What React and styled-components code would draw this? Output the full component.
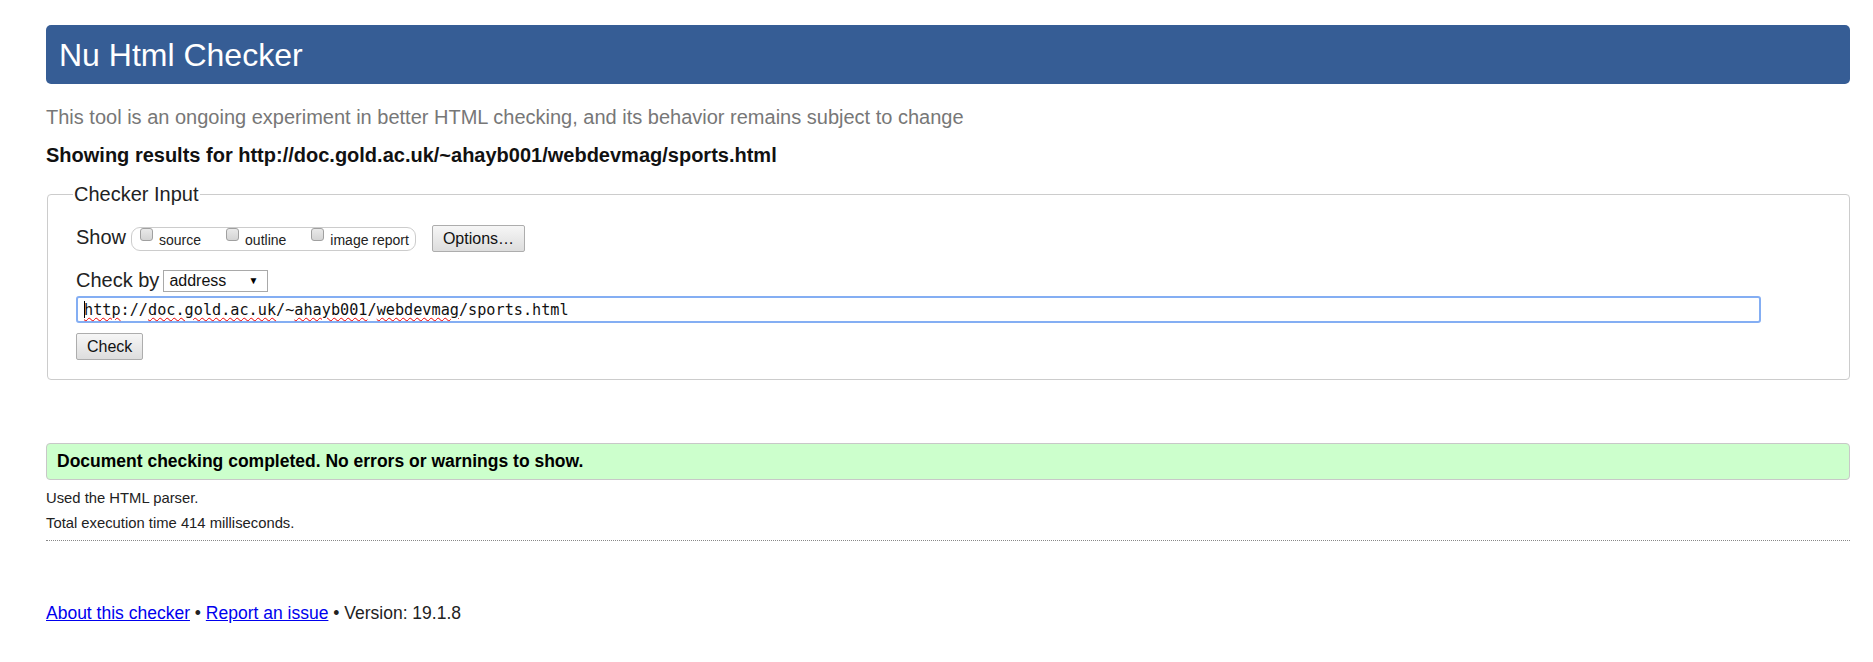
import React from "react";
import styled, { createGlobalStyle } from "styled-components";

const GlobalStyle = createGlobalStyle`
  html, body { margin: 0; padding: 0; background: #fff; }
  body {
    font-family: "Liberation Sans", Arial, sans-serif;
    color: #222;
  }
`;

const Page = styled.div`
  padding: 25px 23px 0 46px;
`;

const Header = styled.h1`
  margin: 0;
  padding: 12px 13px 10px;
  background: #365d95;
  color: #fff;
  border-radius: 5px;
  font-size: 32px;
  line-height: 37px;
  font-weight: normal;
`;

const Tagline = styled.p`
  margin: 22px 0 0;
  font-size: 20px;
  line-height: 23px;
  color: #777;
`;

const ResultsFor = styled.p`
  margin: 15px 0 0;
  font-size: 20px;
  line-height: 23px;
  font-weight: bold;
  color: #111;
`;

const Fieldset = styled.fieldset`
  margin: 16px 0 0 1px;
  padding: 19px 28px 19px 28px;
  border: 1px solid #ccc;
  border-radius: 4px;
  min-width: 0;
`;

const Legend = styled.legend`
  margin-left: -3px;
  padding: 0 1px;
  font-size: 20px;
  line-height: 23px;
  color: #222;
`;

const Row = styled.div`
  display: flex;
  align-items: center;
  gap: ${(p) => p.$gap || 0}px;
  margin-top: ${(p) => p.$top || 0}px;
`;

const RowLabel = styled.span`
  font-size: 20px;
  line-height: 23px;
  margin-bottom: ${(p) => p.$lift || 0}px;
  color: #222;
`;

const Pill = styled.div`
  display: flex;
  align-items: center;
  height: 24px;
  box-sizing: border-box;
  padding: 0 6px 0 8px;
  border: 1px solid #ccc;
  border-radius: 9px;
  margin-right: 11px;
`;

const Option = styled.label`
  display: flex;
  align-items: center;
  height: 22px;
  margin-right: ${(p) => (p.$last ? 0 : 25)}px;
  font-size: 14px;
  color: #222;
`;

const Box = styled.input.attrs({ type: "checkbox" })`
  appearance: none;
  -webkit-appearance: none;
  margin: 0 6px 0 0;
  align-self: flex-start;
  width: 13px;
  height: 13px;
  box-sizing: border-box;
  border: 1px solid #a0a0a0;
  border-radius: 3px;
  background: linear-gradient(#e9e9e9, #d4d4d4);
`;

const OptionText = styled.span`
  margin-top: 2px;
`;

const Button = styled.button`
  height: 27px;
  box-sizing: border-box;
  padding: 0 ${(p) => p.$pad || 10}px;
  font-family: "Liberation Sans", Arial, sans-serif;
  font-size: 16px;
  color: #111;
  border: 1px solid #adadad;
  border-radius: 2px;
  background: linear-gradient(#f6f6f6, #dddddd);
`;

const SelectWrap = styled.div`
  position: relative;
  width: 105px;
  height: 22px;
`;

const Select = styled.select`
  appearance: none;
  -webkit-appearance: none;
  width: 100%;
  height: 100%;
  box-sizing: border-box;
  padding: 0 0 0 5px;
  border: 1px solid #a9a9a9;
  border-radius: 0;
  background: #fff;
  font-family: "Liberation Sans", Arial, sans-serif;
  font-size: 16px;
  color: #111;
`;

const Arrow = styled.span`
  position: absolute;
  right: 10px;
  top: 5px;
  font-size: 10px;
  line-height: 12px;
  color: #000;
  pointer-events: none;
`;

const UrlField = styled.div`
  margin-top: 4px;
  width: 1685px;
  height: 27px;
  box-sizing: border-box;
  display: flex;
  align-items: center;
  padding: 0 0 0 6px;
  border: 2px solid #84aef3;
  border-radius: 3px;
  font-family: "DejaVu Sans Mono", "Liberation Mono", monospace;
  font-size: 15.2px;
  color: #111;
  white-space: pre;
`;

const Caret = styled.span`
  display: inline-block;
  width: 1px;
  height: 17px;
  margin-right: -1px;
  background: #000;
`;

const Misspelled = styled.span`
  text-decoration: underline wavy #e00;
  text-decoration-thickness: 1px;
  text-underline-offset: 2px;
`;

const CheckRow = styled.div`
  margin-top: 10px;
`;

const Notice = styled.div`
  margin-top: 63px;
  padding: 7px 10px;
  border: 1px solid #c8c8c8;
  border-radius: 4px;
  background: #ccffcc;
  font-size: 17.5px;
  line-height: 21px;
  font-weight: bold;
  color: #000;
`;

const Detail = styled.p`
  margin: ${(p) => p.$top}px 0 0;
  font-size: 14.8px;
  line-height: 18px;
  color: #222;
`;

const Rule = styled.hr`
  margin: 8px 0 0;
  border: 0;
  border-top: 1px dotted #888;
  height: 0;
`;

const Footer = styled.p`
  margin: 62px 0 0;
  font-size: 17.5px;
  line-height: 20px;
  color: #222;
`;

const Link = styled.a`
  color: #0000ee;
  text-decoration: underline;
`;

export default function App() {
  return (
    <>
      <GlobalStyle />
      <Page>
        <Header>Nu Html Checker</Header>
        <Tagline>
          This tool is an ongoing experiment in better HTML checking, and its behavior remains subject to change
        </Tagline>
        <ResultsFor>Showing results for http://doc.gold.ac.uk/~ahayb001/webdevmag/sports.html</ResultsFor>

        <Fieldset>
          <Legend>Checker Input</Legend>
          <Row $gap={5}>
            <RowLabel $lift={3}>Show</RowLabel>
            <Pill>
              <Option>
                <Box />
                <OptionText>source</OptionText>
              </Option>
              <Option>
                <Box />
                <OptionText>outline</OptionText>
              </Option>
              <Option $last>
                <Box />
                <OptionText>image report</OptionText>
              </Option>
            </Pill>
            <Button $pad={10}>Options…</Button>
          </Row>
          <Row $gap={4} $top={17}>
            <RowLabel>Check by</RowLabel>
            <SelectWrap>
              <Select defaultValue="address">
                <option value="address">address</option>
                <option value="file">file upload</option>
                <option value="text">text input</option>
              </Select>
              <Arrow>▼</Arrow>
            </SelectWrap>
          </Row>
          <UrlField role="textbox">
            <Caret />
            <Misspelled>http</Misspelled>://<Misspelled>doc.gold.ac.uk</Misspelled>/~
            <Misspelled>ahayb001</Misspelled>/<Misspelled>webdevmag</Misspelled>/sports.html
          </UrlField>
          <CheckRow>
            <Button $pad={10}>Check</Button>
          </CheckRow>
        </Fieldset>

        <Notice>Document checking completed. No errors or warnings to show.</Notice>
        <Detail $top={9}>Used the HTML parser.</Detail>
        <Detail $top={7}>Total execution time 414 milliseconds.</Detail>
        <Rule />
        <Footer>
          <Link href="#about">About this checker</Link> • <Link href="#issue">Report an issue</Link> • Version: 19.1.8
        </Footer>
      </Page>
    </>
  );
}
